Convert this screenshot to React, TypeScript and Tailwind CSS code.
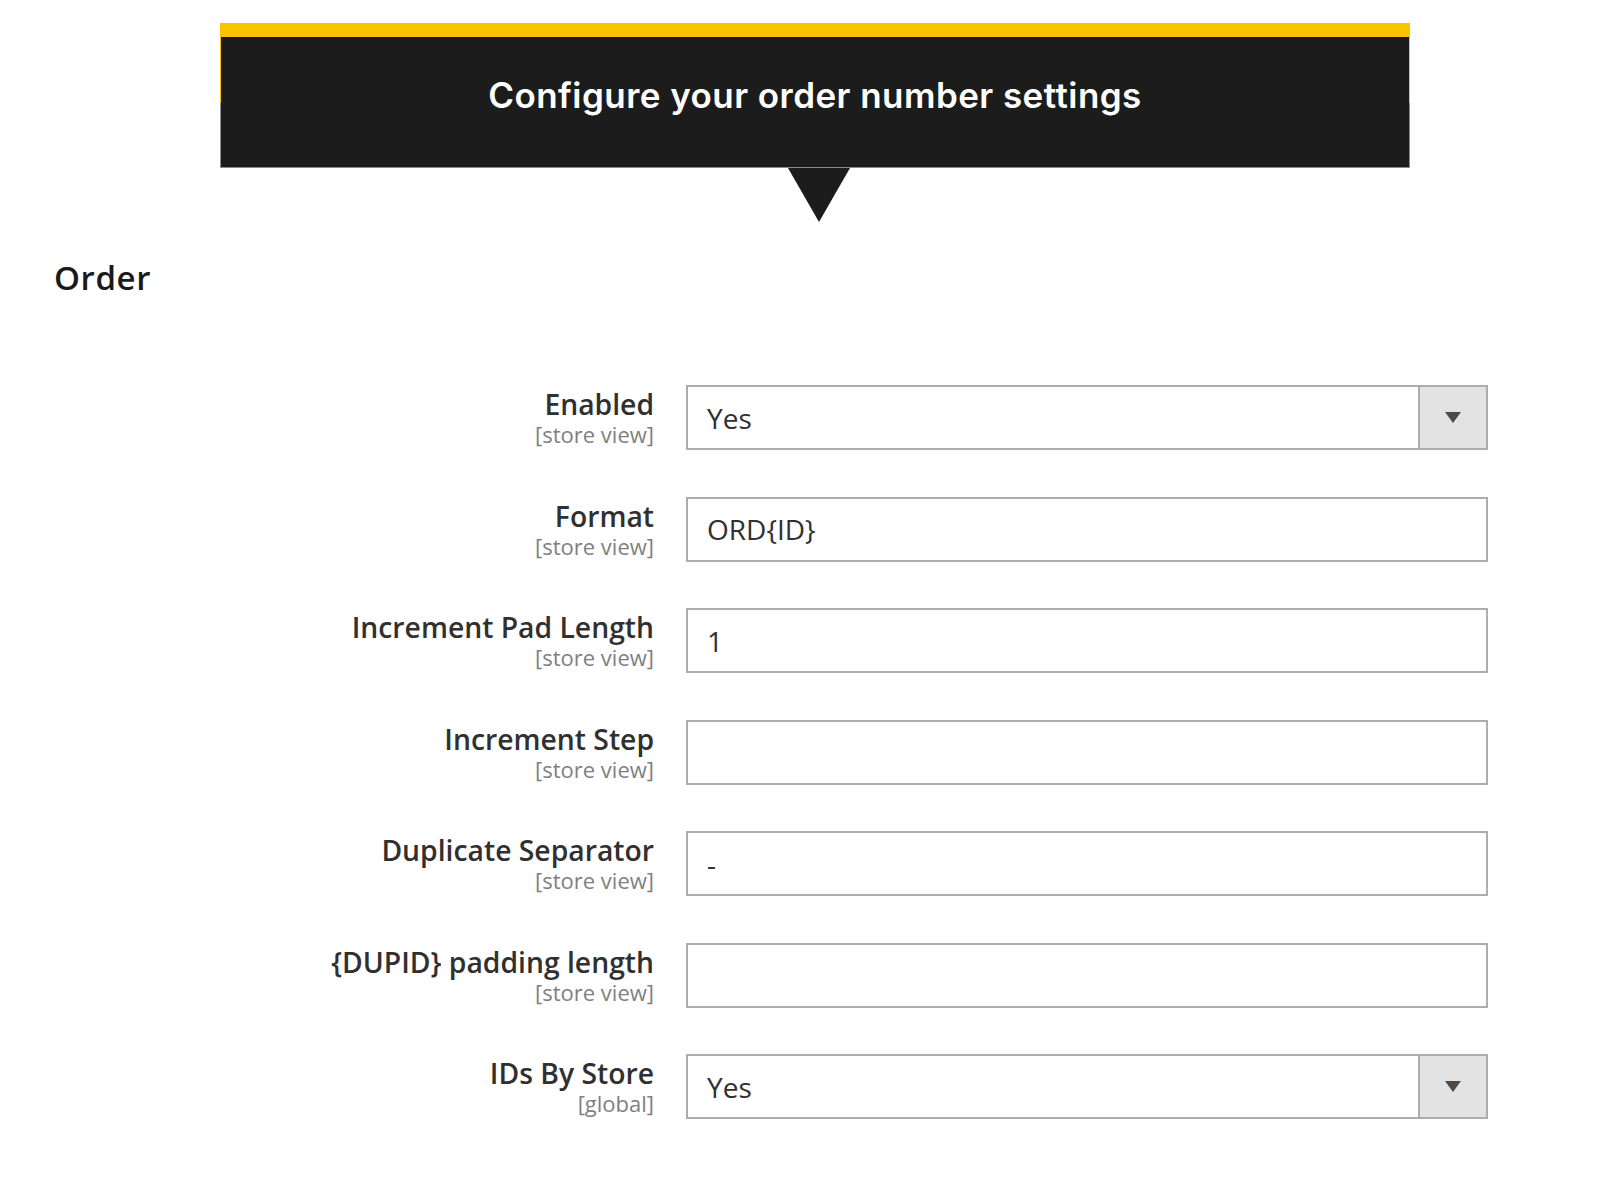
const fields = [
  { label: 'Enabled', scope: '[store view]', value: 'Yes', select: true },
  { label: 'Format', scope: '[store view]', value: 'ORD{ID}' },
  { label: 'Increment Pad Length', scope: '[store view]', value: '1' },
  { label: 'Increment Step', scope: '[store view]', value: '' },
  { label: 'Duplicate Separator', scope: '[store view]', value: '-' },
  { label: '{DUPID} padding length', scope: '[store view]', value: '' },
  { label: 'IDs By Store', scope: '[global]', value: 'Yes', select: true },
];

const Callout = () => (
  <div className="ml-[220px] flex w-[1190px] flex-col pt-[23px]">
    <div className="relative">
      <div className="h-[14px] bg-[#f9c300]" />
      <div className="border-x border-b border-[#8c8c8c] bg-[#1c1c1c] pb-[52px] pt-[38px] text-center">
        <h1 className="font-['Inter',sans-serif] text-[35px] font-semibold leading-[40px] tracking-[0.45px] text-white">
          Configure your order number settings
        </h1>
      </div>
      <span className="absolute left-0 top-[14px] h-[66px] w-px bg-[#f9c300]" />
      <span className="absolute right-0 top-[14px] h-[66px] w-px bg-[#f9c300]" />
    </div>
    <svg className="ml-[568px]" width="62" height="54" viewBox="0 0 62 54">
      <polygon points="0,0 62,0 31,54" fill="#1c1c1c" />
    </svg>
  </div>
);

const Field = ({
  label,
  scope,
  value,
  select,
}: {
  label: string;
  scope: string;
  value: string;
  select?: boolean;
}) => (
  <div className="flex items-start">
    <div className="w-[654px] pt-[4px] text-right">
      <div className="text-[28.3px] font-semibold leading-[30px] text-[#303030]">{label}</div>
      <div className="text-[22px] leading-[30px] text-[#808080]">{scope}</div>
    </div>
    <div className="ml-[32px] flex h-[65px] w-[802px] border-2 border-[#adadad] bg-white">
      <div className="flex flex-1 items-center pl-[19px] text-[28px] text-[#303030]">{value}</div>
      {select && (
        <div className="flex w-[68px] items-center justify-center border-l-2 border-[#adadad] bg-[#e3e3e3]">
          <svg width="16" height="11" viewBox="0 0 16 11">
            <polygon points="0,0 16,0 8,11" fill="#514943" />
          </svg>
        </div>
      )}
    </div>
  </div>
);

export default function App() {
  return (
    <div className="min-h-screen bg-white font-['Open_Sans',sans-serif]">
      <Callout />
      <h2 className="ml-[54px] mt-[36px] text-[33px] font-semibold leading-[40px] tracking-[0.6px] text-[#1a1a1a]">
        Order
      </h2>
      <div className="mt-[87px] flex flex-col gap-[46.5px]">
        {fields.map((f) => (
          <Field key={f.label} {...f} />
        ))}
      </div>
    </div>
  );
}
